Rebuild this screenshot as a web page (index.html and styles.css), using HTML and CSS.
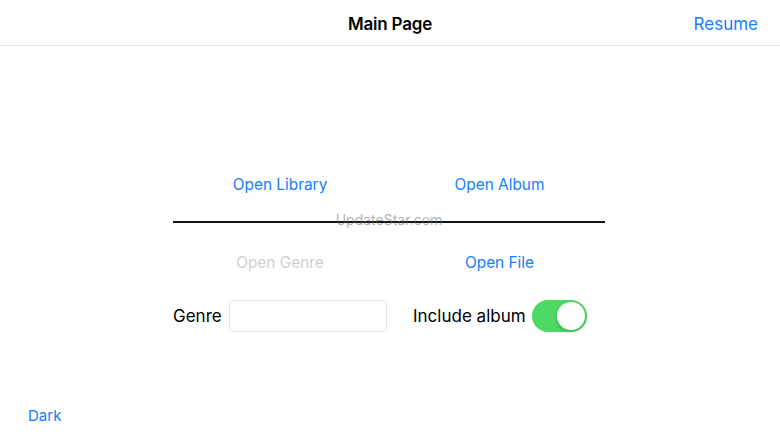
FILE: index.html
```html
<!DOCTYPE html>
<html>
<head>
<meta charset="utf-8">
<link rel="stylesheet" href="styles.css">
</head>
<body>
<div class="page">
  <header class="navbar">
    <div class="nav-side"></div>
    <div class="nav-title">Main Page</div>
    <div class="nav-side nav-right"><span class="link">Resume</span></div>
  </header>
  <main class="content">
    <div class="panel">
      <div class="btn-row">
        <div class="cell"><span class="link">Open Library</span></div>
        <div class="cell cell-right"><span class="link">Open Album</span></div>
      </div>
      <div class="divider">
        <span class="watermark">UpdateStar.com</span>
      </div>
      <div class="btn-row second">
        <div class="cell"><span class="disabled">Open Genre</span></div>
        <div class="cell cell-right"><span class="link">Open File</span></div>
      </div>
      <div class="form-row">
        <div class="field left">
          <span class="label">Genre</span>
          <div class="input"></div>
        </div>
        <div class="field right">
          <span class="label">Include album</span>
          <div class="switch"><div class="knob"></div></div>
        </div>
      </div>
    </div>
  </main>
  <footer class="footer"><span class="link small">Dark</span></footer>
</div>
</body>
</html>
```

FILE: styles.css
```css
html, body {
  margin: 0;
  padding: 0;
  background: #ffffff;
}
body {
  font-family: Inter, "Noto Sans", sans-serif;
  color: #000;
}
.page {
  width: 780px;
  height: 439px;
  display: flex;
  flex-direction: column;
  overflow: hidden;
}
.navbar {
  height: 46px;
  box-sizing: border-box;
  padding: 2px 22px 0;
  border-bottom: 1px solid #e8e8e8;
  display: grid;
  grid-template-columns: 1fr auto 1fr;
  align-items: center;
}
.nav-title {
  font-size: 17px;
  font-weight: 600;
  letter-spacing: -0.2px;
}
.nav-right {
  text-align: right;
  font-size: 17px;
}
.link {
  color: #147efb;
}
.disabled {
  color: #cfcfcf;
}
.content {
  flex: 1;
  display: flex;
  flex-direction: column;
}
.panel {
  width: 432px;
  margin-left: 173px;
  padding-top: 118px;
}
.btn-row {
  display: grid;
  grid-template-columns: 214px 1fr;
  height: 40px;
  font-size: 15.4px;
}
.cell {
  display: flex;
  align-items: center;
  justify-content: center;
}
.cell-right {
  padding-left: 7px;
}
.divider {
  position: relative;
  height: 2px;
  background: #111;
  margin-top: 17px;
  margin-bottom: 19px;
}
.watermark {
  position: absolute;
  left: 50%;
  top: -10px;
  transform: translateX(-50%);
  font-size: 14px;
  color: rgba(110, 110, 110, 0.55);
  white-space: nowrap;
}
.form-row {
  display: grid;
  grid-template-columns: 216px 216px;
  margin-top: 18px;
  height: 32px;
}
.field {
  display: flex;
  align-items: center;
}
.field.left {
  gap: 7px;
}
.field.right {
  gap: 6px;
  padding-left: 24px;
}
.label {
  font-size: 17px;
}
.input {
  width: 156px;
  height: 30px;
  border: 1px solid #e6e6e6;
  border-radius: 5px;
}
.switch {
  width: 55px;
  height: 32px;
  border-radius: 16px;
  background: #4cd964;
  display: flex;
  align-items: center;
  justify-content: flex-end;
  padding: 0 2px;
  box-sizing: border-box;
}
.knob {
  width: 28px;
  height: 28px;
  border-radius: 50%;
  background: #fff;
  box-shadow: 0 2px 4px rgba(0,0,0,0.2);
}
.footer {
  height: 48px;
  padding-left: 28px;
  display: flex;
  align-items: center;
}
.small {
  font-size: 15px;
}
```
